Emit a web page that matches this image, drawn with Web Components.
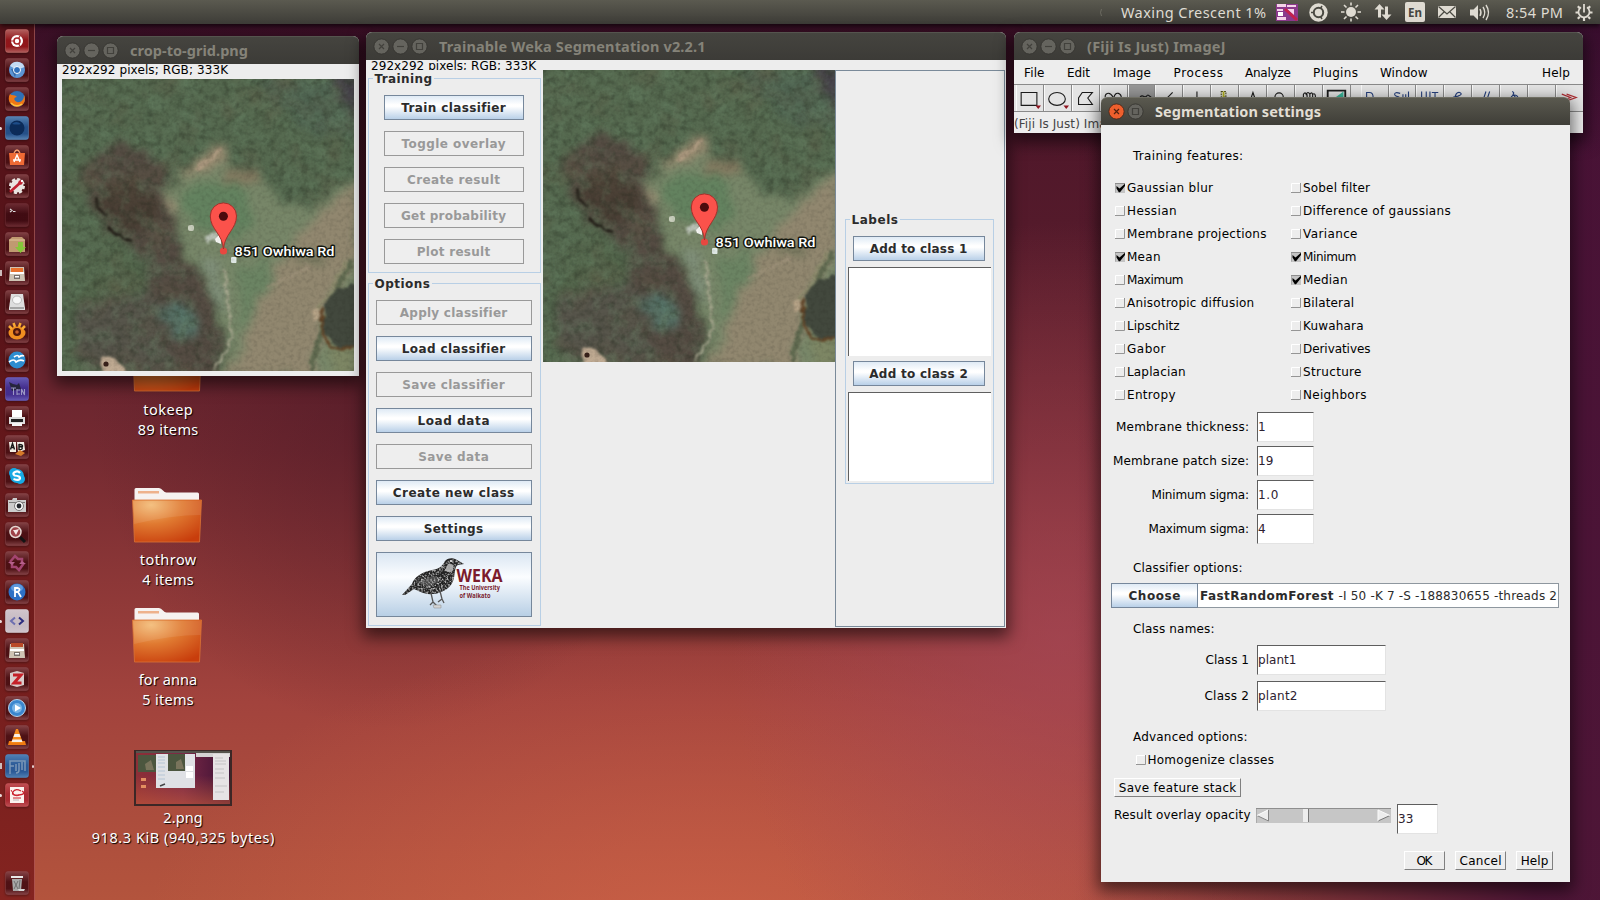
<!DOCTYPE html>
<html lang="en">
<head>
<meta charset="utf-8">
<title>Desktop</title>
<style>
html,body{margin:0;height:100%;overflow:hidden;background:#4a1728}
body{font:12px "DejaVu Sans",sans-serif;color:#000}
</style>
</head>
<body>
<desk-top></desk-top>
<script>
const fits = [];
function define(name, html, setup) {
  const tpl = document.createElement('template');
  tpl.innerHTML = html;
  customElements.define(name, class extends HTMLElement {
    connectedCallback() {
      if (this.shadowRoot) return;
      const root = this.attachShadow({mode: 'open'});
      root.append(tpl.content.cloneNode(true));
      if (setup) setup(this, root);
    }
  });
}

/* Single line of text tracked to a given advance width. */
define('fit-text', `<style>:host{display:inline-block;white-space:pre;flex:none}span{display:inline-block}</style><span><slot></slot></span>`,
  (el, root) => fits.push([el, root.querySelector('span')]));

define('win-button', `<style>
:host{display:block;width:15px;height:15px;flex:none}
svg{display:block;width:15px;height:15px;overflow:visible}
circle{fill:#65645e;stroke:#33322e;stroke-width:.8}path{fill:none;stroke:#42413c;stroke-width:1.2}
:host([hot]) circle{fill:#ee5f2d;stroke:#4b2315}:host([hot]) path{stroke:#52210f}
</style><svg viewBox="0 0 15 15"><circle cx="7.5" cy="7.5" r="7.6"/><path/></svg>`,
  (el, root) => root.querySelector('path').setAttribute('d',
    {close: 'M5 5l5 5M10 5l-5 5', min: 'M4 7.5h7', max: 'M4.500 4.500h6v6h-6z'}[el.getAttribute('kind')]));

define('app-window', `<style>
:host{display:flex;flex-direction:column;position:absolute;box-sizing:border-box;background:#ededed;border-radius:6px 6px 0 0;box-shadow:0 6px 16px 3px rgba(0,0,0,.55)}
header{display:flex;align-items:center;height:28px;flex:none;box-sizing:border-box;gap:4px;padding:0 0 0 8px;border-radius:6px 6px 0 0;background:linear-gradient(#45443f,#3c3b37);border-top:1px solid #55544e;font:bold 14.5px "Noto Sans",sans-serif;color:#858379}
.t{margin-left:8px;line-height:22px;margin-top:-1px}
:host([active]) header{background:linear-gradient(#5a594f,#3f3e38);color:#e2ded4;border-top-color:#6f6e63}
.body{flex:1;min-height:0;display:flex;flex-direction:column}
</style><header><win-button kind="close"></win-button><win-button kind="min"></win-button><win-button kind="max"></win-button><div class="t"><slot name="title"></slot></div></header><div class="body"><slot></slot></div>`,
  (el, root) => { if (el.hasAttribute('active')) { root.querySelector('[kind=min]').remove(); root.querySelector('[kind=close]').setAttribute('hot', ''); } });

define('aerial-photo', `<style>:host{display:block;width:292px;height:292px;flex:none}svg{display:block}text{font:500 13.4px Roboto,sans-serif}filter{color-interpolation-filters:sRGB}</style>
<svg width="292" height="292" viewBox="0 0 292 292">
<defs>
<filter id="edge" x="-10%" y="-10%" width="120%" height="120%"><feTurbulence type="fractalNoise" baseFrequency=".06" numOctaves="3" seed="4"/><feDisplacementMap in="SourceGraphic" scale="24" xChannelSelector="R" yChannelSelector="G"/><feGaussianBlur stdDeviation="4"/></filter>
<filter id="fine" x="-20%" y="-20%" width="140%" height="140%"><feTurbulence type="fractalNoise" baseFrequency=".15" numOctaves="2" seed="8"/><feDisplacementMap in="SourceGraphic" scale="7" xChannelSelector="R" yChannelSelector="G"/><feGaussianBlur stdDeviation="1"/></filter>
<filter id="dark" x="0" y="0" width="100%" height="100%"><feTurbulence type="fractalNoise" baseFrequency=".13" numOctaves="3" seed="11"/><feColorMatrix values="0 0 0 0 .14  0 0 0 0 .17  0 0 0 0 .12  2 0 0 0 -.9"/><feGaussianBlur stdDeviation=".5"/></filter>
<filter id="lite" x="0" y="0" width="100%" height="100%"><feTurbulence type="fractalNoise" baseFrequency=".06" numOctaves="4" seed="23"/><feColorMatrix values="0 0 0 0 .42  0 0 0 0 .54  0 0 0 0 .42  0 2.2 0 0 -.95"/></filter>
<filter id="brown" x="0" y="0" width="100%" height="100%"><feTurbulence type="fractalNoise" baseFrequency=".025" numOctaves="3" seed="31"/><feColorMatrix values="0 0 0 0 .38  0 0 0 0 .35  0 0 0 0 .28  0 0 3 0 -1.4"/></filter>
<filter id="grain" x="0" y="0" width="100%" height="100%"><feTurbulence type="fractalNoise" baseFrequency=".25" numOctaves="2" seed="5"/><feColorMatrix values="0 0 0 0 .1  0 0 0 0 .1  0 0 0 0 .08  1.2 0 0 0 -.5"/></filter>
<clipPath id="c"><rect width="292" height="292"/></clipPath>
</defs>
<g clip-path="url(#c)">
<rect width="292" height="292" fill="#566a50"/>
<g filter="url(#edge)">
<path d="M190 0H300V60L240 50Z" fill="#516653"/><path d="M270 -5H300V40L280 25Z" fill="#46424a"/>
<path d="M18 90L60 62L100 84L108 120L122 165L150 215L166 262L150 300H70L40 262L90 235L84 180L60 160L30 130Z" fill="#554c43"/>
<path d="M35 108L80 98L104 140L60 158L40 135Z" fill="#4a3f35"/>
<path d="M10 235L60 200L90 215L110 292H20Z" fill="#57554b"/>
<path d="M20 180L60 172L85 195L70 215L15 225Z" fill="#54664c"/>
<path d="M90 225L125 225L140 250L110 262Z" fill="#557268"/>
</g>
<rect width="292" height="292" filter="url(#brown)" opacity=".4"/>
<rect width="292" height="292" filter="url(#lite)" opacity=".4"/>
<rect width="292" height="292" filter="url(#dark)" opacity=".42"/>
<g filter="url(#edge)">
<path d="M103 110L130 90L160 66L168 86L198 92L208 116L245 135L300 92V300H150L170 272L158 236L135 195L120 165Z" fill="#778668"/>
<path d="M118 96L150 68L164 62L162 84L140 96Z" fill="#988a70"/><path d="M160 88L195 90L196 106L166 108Z" fill="#83785f"/>
<path d="M118 110Q150 92 186 112L192 140L178 160L130 150Z" fill="#63825f"/><path d="M138 180L158 180L166 240L152 225Z" fill="#7f8e79"/><path d="M172 190L212 176L198 222L178 252Z" fill="#6b8463"/>
<path d="M300 96L292 180L265 225L248 300H150L182 268L198 222L218 180L235 158L262 132Z" fill="#91876f"/>
<path d="M300 205L262 300H300Z" fill="#7d8664"/><ellipse cx="250" cy="178" rx="14" ry="5" fill="#6c7157"/>
<path d="M102 105L116 130L106 134Z" fill="#9a8d74"/>
</g>
<g filter="url(#fine)" fill="none">
<path d="M163 190Q166 225 169 250Q171 272 150 290" stroke="#a8a890" stroke-width="2.500"/>
<path d="M290 182L268 222L248 292" stroke="#5f694f" stroke-width="5"/><path d="M284 182L270 210L254 232" stroke="#8c8c6c" stroke-width="2"/>
<path d="M262 225L274 210L298 204V270L274 268L262 252Z" fill="#42483d"/>
<path d="M259 228L261 252L268 267L276 270L292 268" stroke="#604225" stroke-width="2.500"/>
<ellipse cx="254" cy="236" rx="4" ry="6" fill="#b6a387"/>
<path d="M34 118Q36 132 46 138M45 148L54 156L70 162" stroke="#221d17" stroke-width="2.500"/>
<path d="M205 208L248 188M242 184L248 192" stroke="#a0937c" stroke-width="1.500"/>
<path d="M158 70L150 80L134 90" stroke="#ad9a80" stroke-width="3.500"/>
<path d="M38 280Q44 275 54 280L66 294H40Z" fill="#bfaa92"/>
</g>
<circle cx="44" cy="285" r="2.600" fill="#37211a"/><rect x="126" y="146" width="6" height="6" rx="2" fill="#c9cfbd"/>
<path d="M143 158l8-6 2 4 2-4 3 11-9-3-4 6Z" fill="#b9c1b5" filter="url(#fine)"/><path d="M153 160l6-6v11l-5-2Z" fill="#f4f4f1"/><rect x="169" y="178" width="5.500" height="6" rx="1" fill="#e3ece9"/>
<rect width="292" height="292" filter="url(#grain)" opacity=".25"/>
<circle cx="161.500" cy="172" r="3.600" fill="#e74840"/>
<path d="M161.500 170C160.500 155 148.300 150 148.300 137A13.100 13.100 0 0 1 174.500 137C174.500 150 162.500 155 161.500 170Z" fill="#fb524b" stroke="#a5302b" stroke-width="1"/><circle cx="161.400" cy="137.200" r="4.500" fill="#4c0b0d"/>
<text x="172.500" y="176.700" textLength="100" lengthAdjust="spacingAndGlyphs" fill="#fff" stroke="#15180f" stroke-width="2.800" stroke-linejoin="round" paint-order="stroke">851 Owhiwa Rd</text>
</g></svg>`);

/* ---- Swing widgets ---- */
define('swing-button', `<style>
:host{display:flex;align-items:center;justify-content:center;box-sizing:border-box;height:25px;border:1px solid #76879b;font-weight:bold;color:#2b2b2b;background:linear-gradient(#dfeaf5 0,#fff 38%,#fff 45%,#b9d0e8 100%);flex:none}
:host([off]){background:#eee;border-color:#999;color:#999}
:host([logo]){height:65px;background:linear-gradient(#dae6f2 0,#fbfdff 38%,#b8cfe5 100%)}
</style><slot></slot>`);
define('swing-group', `<style>
:host{display:flex;flex-direction:column;align-items:center;position:relative;box-sizing:border-box;border:1px solid #b8cfe5;flex:none}
.l{position:absolute;left:3.500px;top:-7px;padding:0 2px;background:#ededed;font-weight:bold;color:#2b2b2b;line-height:14px}
</style><div class="l"><slot name="label"></slot></div><slot></slot>`);
define('list-box', `<style>:host{display:block;box-sizing:border-box;width:143px;height:89px;background:#fff;border-top:1px solid #5f5f5f;border-left:1px solid #5f5f5f;flex:none}</style>`);

define('weka-logo', `<style>:host{display:block;width:154px;height:63px}svg{display:block}text{font-family:"Open Sans",sans-serif;font-weight:bold;fill:#7b1c2d}filter{color-interpolation-filters:sRGB}</style>
<svg width="154" height="63" viewBox="1 1 154 63"><defs><filter id="s" x="0" y="0" width="100%" height="100%"><feTurbulence type="fractalNoise" baseFrequency=".55" numOctaves="2" seed="3"/><feColorMatrix values="0 0 0 0 .72 0 0 0 0 .72 0 0 0 0 .72 3 0 0 0 -1.3"/><feComposite in2="SourceGraphic" operator="in" result="n"/><feMerge><feMergeNode in="SourceGraphic"/><feMergeNode in="n"/></feMerge></filter></defs>
<g filter="url(#s)"><path d="M26 43L36 32C38 25 46 20 56 18C64 17 67 13 69 9C71 6 77 5 81 8L88 12L82 13C79 14 79 20 78 26C76 35 68 41 57 42C49 43 43 39 38 37L29 43Z" fill="#242424"/><path d="M72 12C76 11 78 13 77 18C75 22 71 20 69 18Z" fill="#a5a5a5"/><path d="M40 30L58 24L66 28L52 35Z" fill="#4a4a4a"/></g>
<circle cx="75" cy="9" r="1" fill="#fff"/><path d="M55 41L57 50L54 53M57 50L61 54M64 39L66 47L62 50M66 47L68 51" fill="none" stroke="#555" stroke-width="1.300"/><path d="M57 53h8v3h-7z" fill="#d4d4d4" stroke="#888" stroke-width=".5"/>
<text x="80.500" y="29.500" font-size="18.500" textLength="46" lengthAdjust="spacingAndGlyphs">WEKA</text><text x="83.500" y="37.500" font-size="6.800" textLength="40.500" lengthAdjust="spacingAndGlyphs">The University</text><text x="83.500" y="45.500" font-size="6.800" textLength="31" lengthAdjust="spacingAndGlyphs">of Waikato</text></svg>`);

define('weka-content', `<style>
:host{display:grid;grid-template-columns:177px 292px 1fr;grid-template-rows:10px 1fr;flex:1;min-height:0}
.info{grid-column:1/4;overflow:hidden;height:10px;line-height:14px;padding-left:5px;box-sizing:border-box}
.info fit-text{margin-top:-1px;display:block}
.left{padding-left:2px;position:relative}
.tr{width:173px;height:195px;margin-top:8px;padding:16px 2px 0 0;gap:11px}.tr swing-button{width:140px}
.op{width:173px;height:343px;margin-top:10px;padding:16px 2px 0 0;gap:11px}.op swing-button{width:156px}
.right{border:1px solid #7a8a99;margin-right:1px;margin-bottom:1px;padding:148px 0 0 9px}
.lb{width:149px;height:265px;padding:16px 2px 0 0}.lb swing-button{width:132px}.lb list-box{margin:6px -1px 5px 0}
</style>
<div class="info"><fit-text w="165">292x292 pixels; RGB; 333K</fit-text></div>
<div class="left">
<swing-group class="tr"><fit-text slot="label" w="57.500">Training</fit-text>
<swing-button><fit-text w="104">Train classifier</fit-text></swing-button><swing-button off><fit-text w="104">Toggle overlay</fit-text></swing-button><swing-button off><fit-text w="93">Create result</fit-text></swing-button><swing-button off><fit-text w="105">Get probability</fit-text></swing-button><swing-button off><fit-text w="73.500">Plot result</fit-text></swing-button></swing-group>
<swing-group class="op"><fit-text slot="label" w="55.500">Options</fit-text>
<swing-button off><fit-text w="107">Apply classifier</fit-text></swing-button><swing-button><fit-text w="103">Load classifier</fit-text></swing-button><swing-button off><fit-text w="102">Save classifier</fit-text></swing-button><swing-button><fit-text w="72">Load data</fit-text></swing-button><swing-button off><fit-text w="70.500">Save data</fit-text></swing-button><swing-button><fit-text w="121.500">Create new class</fit-text></swing-button><swing-button><fit-text w="59.500">Settings</fit-text></swing-button><swing-button logo><weka-logo></weka-logo></swing-button></swing-group>
</div>
<aerial-photo></aerial-photo>
<div class="right"><swing-group class="lb"><fit-text slot="label" w="46.500">Labels</fit-text>
<swing-button><fit-text w="97.500">Add to class 1</fit-text></swing-button><list-box></list-box><swing-button><fit-text w="98.500">Add to class 2</fit-text></swing-button><list-box></list-box></swing-group></div>`);

/* ---- ImageJ main window ---- */
define('imagej-content', `<style>
:host{display:block}
nav{display:flex;height:24px;align-items:center;padding:1px 0 0 10px;background:#ededed;box-sizing:border-box;font-size:12px}
nav fit-text:last-child{margin-left:auto;margin-right:13px}
.status{line-height:17px;height:21px;padding-top:4px;box-sizing:border-box;color:#444}
svg{fill:none;stroke:#1b1b1b;stroke-width:1.200}
.tools{display:flex;height:28px;box-sizing:border-box;border-top:1px solid #8a8a8a;border-bottom:1px solid #8a8a8a;padding-left:2px;background:#e4e4e4}
.tools svg{display:block;width:27.900px;height:26px;flex:none;box-sizing:border-box;border-left:1px solid #fafafa;border-right:1px solid #8a8a8a}
.tools .b{stroke:#27417e}.sp{width:10px;flex:none}.tools .sel{background:#979797}
.k{fill:#901520;stroke:none}
</style>
<nav></nav>
<div class="tools">
<svg viewBox="0 0 28 26"><path d="M4.500 7h17v14h-17z"/><path class="k" d="M20 21h6l-3 4z"/></svg>
<svg viewBox="0 0 28 26"><ellipse cx="13" cy="14" rx="9" ry="7"/><path class="k" d="M20 21h6l-3 4z"/></svg>
<svg viewBox="0 0 28 26"><path d="M6 20V13L10 7H21L16 13L21 20Z"/></svg>
<svg viewBox="0 0 28 26"><path d="M13 12C9 5 3 8 5 14C8 20 14 20 14 12C16 5 22 8 22 13"/></svg>
<svg class="sel" viewBox="0 0 28 26"><path d="M12 12c3-4 5 2 7-1s2 0 5 1"/></svg>
<svg viewBox="0 0 28 26"><path d="M10 15L18 7"/></svg>
<svg viewBox="0 0 28 26"><path d="M14 6v12"/></svg>
<svg viewBox="0 0 28 26"><path d="M10 6h5v6h-5z" stroke="#4c4b17" stroke-dasharray="2 1"/><path d="M12.500 6v6" stroke="#b3b11e" stroke-width="2"/></svg>
<svg viewBox="0 0 28 26"><path d="M11 16L14 7L17 16"/></svg>
<svg viewBox="0 0 28 26"><circle cx="12" cy="12" r="4.500"/></svg>
<svg viewBox="0 0 28 26"><path d="M8 13V9q2-3 3 0q2-4 4 0q2-3 3 0q3-2 3 3M12 9v4M15 9v4M18 9v4"/></svg>
<svg viewBox="0 0 28 26"><path d="M4 5h19v18H4z" stroke-width="2"/><path d="M13 12l8-6v8z" fill="#39b79a" stroke="none"/></svg>
<i class="sp"></i>
<svg class="b" viewBox="0 0 28 26"><path d="M5 7h3q4 0 4 5v4H5z"/></svg>
<svg class="b" viewBox="0 0 28 26"><path d="M11 8q-6-2-6 1 0 2 5 3M14 9v4h3V9M20 6v9"/></svg>
<svg class="b" viewBox="0 0 28 26"><path d="M5 6v8h3M10 6v6q2 3 4 0V6M16 7h7M19.500 7v8"/></svg>
<svg class="b" viewBox="0 0 28 26"><path d="M10 16q1-10 6-9q4 2-2 4l-4 1 5 3"/></svg>
<svg class="b" viewBox="0 0 28 26"><path d="M11 15L14 6M15 15L18 6"/></svg>
<svg class="b" viewBox="0 0 28 26"><path d="M12 6q3 1 1 3l4 5M11 12q2-3 5-2q3 1 2 4"/></svg>
<svg viewBox="0 0 28 26"></svg>
<svg viewBox="0 0 28 26" style="border-right:0"><path d="M5 9l9 3.500-9 3.500M10 9l10 3.500-10 3.500" stroke="#b22b31"/></svg>
</div><div class="status"><fit-text w="146">(Fiji Is Just) ImageJ 2.0.0</fit-text></div>`,
(el, root) => {
  const nav = root.querySelector('nav');
  let x = 10;
  for (const [t, l, w] of [['File',10,20.500],['Edit',53,23],['Image',99,38],['Process',159.500,49.500],['Analyze',231,46],['Plugins',299,45],['Window',366,47.500],['Help',0,28]]) {
    const f = document.createElement('fit-text'); f.setAttribute('w', w); f.textContent = t;
    if (l) { f.style.marginLeft = (l - x) + 'px'; x = l + w; }
    nav.append(f);
  }
});

/* ---- AWT widgets ---- */
define('awt-check', `<style>:host{display:flex;align-items:center;gap:2px}svg{display:block;width:10px;height:10px;flex:none}</style><svg viewBox="0 0 10 10"></svg><slot></slot>`,
 (el, root) => root.querySelector('svg').innerHTML = el.hasAttribute('on')
  ? '<path d="M0 0h10v10H0z" fill="#c4c4c4"/><path d="M0 9.500V.5H10" fill="none" stroke="#8d8d8d"/><path d="M1.500 3L4.500 5.500L10 .8V3L5 9.200H3.800L1.500 5.500Z" fill="#000"/>'
  : '<path d="M.5 10V.5H10" fill="none" stroke="#fff"/><path d="M9.500 0V9.500H0" fill="none" stroke="#959595"/>');
define('awt-field', `<style>:host{display:flex;align-items:center;box-sizing:border-box;width:57px;height:30px;background:#fff;border:1px solid #e3e3e3;border-top-color:#5e5e5e;border-left-color:#5e5e5e;color:#2d2130;flex:none}</style><slot></slot>`);
define('awt-button', `<style>:host{display:flex;align-items:center;justify-content:center;box-sizing:border-box;height:19px;border:1px solid #fff;border-right-color:#808080;border-bottom-color:#808080;flex:none}</style><slot></slot>`);
define('awt-scroll', `<style>:host{display:block;width:135px;height:15px;flex:none}svg{display:block}</style><svg width="135" height="15"><path d="M0 0h135v15H0z" fill="#c6c6c6"/><path d="M0 15V.5H135" fill="none" stroke="#8e8e8e"/><path d="M12 2V13L1 7.500Z" fill="#ededed"/><path d="M12.500 2V13L1 7.500" fill="none" stroke="#858585"/><path d="M12 2L1 7.500" stroke="#fff"/><path d="M122 2V13L134 7.500Z" fill="#ededed"/><path d="M122 13L134 7.500" stroke="#777"/><path d="M122 13V2L134 7.500" fill="none" stroke="#fafafa"/><path d="M47 1h6v13h-6z" fill="#ededed"/><path d="M52.500 1v13" stroke="#777"/></svg>`);

define('settings-form', `<style>
:host{display:flex;flex-direction:column;flex:1}
h3{margin:0;font:inherit;padding-left:32px;line-height:14px;flex:none;box-sizing:border-box}
.checks{display:grid;grid-template:repeat(10,23px)/176px 1fr;grid-auto-flow:column;padding-left:14px;margin-bottom:4px}
.row{display:flex;align-items:center;height:34px;flex:none}.row>div{width:148px;display:flex;justify-content:flex-end;margin-right:8px}
.row.c{height:36px}.c awt-field{width:129px}
.choose{display:flex;height:25px;padding-left:10px;flex:none}.choose swing-button{width:87px}.choose swing-button fit-text{margin-top:1px}
.opt{display:flex;align-items:center;box-sizing:border-box;width:361px;height:25px;padding-top:1px;background:#fff;border:1px solid #8e979f;border-left:0;padding-left:2px;color:#2b2b2b}
.ft{display:flex;justify-content:flex-end;padding-right:17px;margin-top:17px}
</style>
<h3 style="height:51px;padding-top:24px"><fit-text w="110">Training features:</fit-text></h3>
<div class="checks"></div>
<div class="row"><div><fit-text w="133">Membrane thickness:</fit-text></div><awt-field>1</awt-field></div>
<div class="row"><div><fit-text w="136">Membrane patch size:</fit-text></div><awt-field>19</awt-field></div>
<div class="row"><div><fit-text w="97.500">Minimum sigma:</fit-text></div><awt-field><fit-text w="20.500">1.0</fit-text></awt-field></div>
<div class="row"><div><fit-text w="100.500">Maximum sigma:</fit-text></div><awt-field>4</awt-field></div>
<h3 style="height:37px;padding-top:15px"><fit-text w="109.500">Classifier options:</fit-text></h3>
<div class="choose"><swing-button><fit-text w="52">Choose</fit-text></swing-button><div class="opt"><b><fit-text w="133.500">FastRandomForest</fit-text></b><fit-text style="margin-left:5px" w="218.500">-I 50 -K 7 -S -188830655 -threads 2</fit-text></div></div>
<h3 style="height:34px;padding-top:14px"><fit-text w="81.500">Class names:</fit-text></h3>
<div class="row c"><div><fit-text w="43.500">Class 1</fit-text></div><awt-field><fit-text w="38.500">plant1</fit-text></awt-field></div>
<div class="row c"><div><fit-text w="44.500">Class 2</fit-text></div><awt-field><fit-text w="39.500">plant2</fit-text></awt-field></div>
<h3 style="height:35px;padding-top:16px"><fit-text w="114.500">Advanced options:</fit-text></h3>
<awt-check style="height:21px;padding-left:34.500px;flex:none"><fit-text w="126.500">Homogenize classes</fit-text></awt-check>
<awt-button style="width:127px;margin:8px 0 7px 13px;"><fit-text w="117.500">Save feature stack</fit-text></awt-button>
<div style="display:flex;height:30px;align-items:flex-start;padding-left:13px;flex:none"><fit-text w="136.500" style="margin:4px 5.500px 0 0">Result overlay opacity</fit-text><awt-scroll style="margin-top:4px"></awt-scroll><awt-field style="width:41px;margin-left:6px"><fit-text w="15.500">33</fit-text></awt-field></div>
<div class="ft"><awt-button style="width:41px;margin-right:10px"><fit-text w="16">OK</fit-text></awt-button><awt-button style="width:51px;margin-right:10px"><fit-text w="42">Cancel</fit-text></awt-button><awt-button style="width:37px"><fit-text w="27.500">Help</fit-text></awt-button></div>`,
(el, root) => {
  const box = root.querySelector('.checks');
  for (const [t, w, on] of [['Gaussian blur',86,1],['Hessian',49.500],['Membrane projections',139.500],['Mean',33.500,1],['Maximum',56.500],['Anisotropic diffusion',127],['Lipschitz',52.500],['Gabor',38.500],['Laplacian',58.500],['Entropy',48.500],['Sobel filter',67],['Difference of gaussians',147.500],['Variance',54.500],['Minimum',53.500,1],['Median',44.500,1],['Bilateral',51],['Kuwahara',60.500],['Derivatives',67.500],['Structure',58.500],['Neighbors',63.500]]) {
    const c = document.createElement('awt-check'); if (on) c.setAttribute('on', '');
    const f = document.createElement('fit-text'); f.setAttribute('w', w); f.textContent = t;
    c.append(f); box.append(c);
  }
});

/* ---- Panel ---- */
define('top-panel', `<style>
:host{display:flex;align-items:center;height:24px;box-sizing:border-box;padding-left:1100px;background:linear-gradient(#5b5a50,#3d3c37);font:14.500px "Noto Sans",sans-serif;color:#dfdbd2;box-shadow:0 2px 5px rgba(0,0,0,.7);position:relative}
svg{display:block;flex:none;height:24px}fit-text{line-height:24px;margin-top:0}
text{font:bold 12px "Noto Sans",sans-serif}
</style>
<svg width="21" viewBox="0 0 21 24"><path d="M1.500 9q-2 3.500 0 7" fill="none" stroke="#7b796f" stroke-width=".7"/></svg>
<fit-text w="145">Waxing Crescent 1%</fit-text>
<svg style="width:240px" viewBox="1266 0 240 24" fill="#dfdbd2">
<path d="M1276 4h22v17h-22z" fill="#8b3a8d"/><path d="M1277 4h9v3h-9zM1287 5h9v2h-9zM1277 9h6v2h-6zM1277 17h9v3h-9zM1287 9h7v6z" fill="#f5d2ea"/><path d="M1278 12h5v4h-5z" fill="#fff"/><path d="M1285 9l12 11" stroke="#c5204c" stroke-width="3"/>
<circle cx="1318.500" cy="12.500" r="9.200"/><circle cx="1318.500" cy="12.500" r="4.700" fill="none" stroke="#4a4942" stroke-width="2"/><path d="M1311 12.500h2.500M1322 6l-1.500 2.500M1322 19l-1.500-2.500" stroke="#4a4942" stroke-width="1.500"/>
<circle cx="1351" cy="12" r="5"/><path d="M1351 2.500v3M1351 18.500v3M1341 12h3.500M1357.500 12h3.500M1344 5l2.500 2.500M1355.500 16.500l2.500 2.500M1358 5l-2.500 2.500M1346.500 16.500l-2.500 2.500" stroke="#dfdbd2" stroke-width="1.600"/>
<path d="M1379.500 4l5 5.500h-3.500v8h-3v-8h-3.500zM1386.500 20l5-5.500h-3.500v-8h-3v8h-3.500z"/>
<rect x="1405" y="2" width="20" height="20" rx="2"/><text x="1408" y="17" textLength="14" lengthAdjust="spacingAndGlyphs" fill="#46453f">En</text>
<path d="M1438 6h18v12h-18z"/><path d="M1438.500 6.500l8.500 7.500 8.500-7.500M1438.500 17.500l6-6M1455.500 17.500l-6-6" fill="none" stroke="#4a4942" stroke-width="1.200"/>
<path d="M1470 9.500h3.500l4.500-4.500v15l-4.500-4.500h-3.500z"/><path d="M1480 9q2 3.500 0 7M1483 7q3.500 5.500 0 11M1486 5q5 7.500 0 15" fill="none" stroke="#dfdbd2" stroke-width="1.400"/>
</svg>
<fit-text w="57">8:54 PM</fit-text>
<svg width="37" viewBox="1563 0 37 24" fill="none" stroke="#dfdbd2"><path d="M1581 7.200a5.500 5.500 0 1 0 6 0" stroke-width="1.700"/><path d="M1584 4v8.500" stroke-width="1.800"/><path d="M1575.500 12.500h2.500M1590 12.500h2.500M1584 18v3M1577.800 6.300l2 2M1590.200 6.300l-2 2M1577.800 18.700l2-2M1590.200 18.700l-2-2" stroke-width="2.200"/></svg>`);

/* ---- Launcher ---- */
const dimTile = ['#8c4a4e','#4d1115'];
const ICONS = [
 [['#c8706d','#a0191d'],'<circle cx="12" cy="12" r="6" fill="#fff"/><circle cx="12" cy="12" r="3" fill="none" stroke="#a72428" stroke-width="1.600"/><path d="M5.500 12h3.500M15 7l-1.500 2.500M15 17l-1.500-2.500" stroke="#a72428" stroke-width="1.200"/>'],
 [dimTile,'<circle cx="12" cy="12" r="8" fill="#5c95d4"/><path d="M12 12L5 8a8 8 0 0 1 14.500 1z" fill="#c3daf3"/><path d="M12 12l-6-1 4 8z" fill="#3465a4"/><circle cx="12" cy="12" r="3.500" fill="#2e6fbb" stroke="#fff"/>'],
 [dimTile,'<circle cx="12" cy="12" r="8" fill="#2f70b6"/><path d="M5 7C1 14 7 21 14 19.500C20 18 21 12 19 8C19 13 16 16 12 15C8 13 9 10 12 10C9 7 7 9 5 7Z" fill="#ee7615"/><path d="M6 16q5 5 11 1" stroke="#ffc33c" fill="none" stroke-width="1.500"/>'],
 [['#5b97ce','#225c9d'],'<circle cx="12" cy="12" r="7.500" fill="#0c2b58"/><path d="M7 8q4-4 9 0-4 1-9 0z" fill="#1d4c88"/>'],
 [dimTile,'<path d="M4 8h16l-1 12H5z" fill="#ee6a35"/><path d="M9 8q3-6 6 0" stroke="#f7a070" fill="none" stroke-width="1.300"/><path d="M9 17l3-7 3 7M8 15h8" stroke="#fff" fill="none" stroke-width="1.400"/>'],
 [dimTile,'<circle cx="12" cy="12" r="6.500" fill="#e9e4e0" stroke="#e9e4e0" stroke-width="3" stroke-dasharray="3 2"/><path d="M5 18l10-9" stroke="#c02030" stroke-width="2.600"/><circle cx="15.500" cy="8.500" r="2.200" fill="#c02030"/><circle cx="17" cy="7" r="1.200" fill="#fff"/>'],
 [['#743038','#420c13'],'<path d="M5 6l2 1.500-2 1.500M8 8.500h2.500" stroke="#ddd" stroke-width="1.200" fill="none"/>'],
 [dimTile,'<path d="M4 8l3-3h10l3 3v12H4z" fill="#c09a70"/><path d="M4 8h16" stroke="#e0c49b"/><path d="M13 10h5v5h3l-5.500 6-5.500-6h3z" fill="#85c63a"/>'],
 [dimTile,'<path d="M5 6h14l1 14H4z" fill="#cfc4b4"/><path d="M6 7h12v4H6z" fill="#e8722e"/><path d="M5 11h14v2H5z" fill="#fff"/><path d="M9 14h6v4H9z" fill="#77706a"/><path d="M10 15h4v1.500h-4z" fill="#fff"/>'],
 [dimTile,'<path d="M6 4h12l2 14v2H4v-2z" fill="#dedede"/><ellipse cx="12" cy="10" rx="4.500" ry="4" fill="#f7f7f7" stroke="#bcbcbc"/><path d="M5 17h14v2H5z" fill="#a5a5a5"/>'],
 [dimTile,'<ellipse cx="12" cy="14" rx="8.500" ry="6.500" fill="#ef8e20"/><path d="M4 7l3 3M8.500 4l1.500 4M15.500 4l-1.500 4M20 7l-3 3" stroke="#f9a933" stroke-width="2.500"/><circle cx="12" cy="13" r="4" fill="#4d170c"/><circle cx="12" cy="13" r="1.800" fill="#c5602e"/>'],
 [dimTile,'<circle cx="12" cy="12" r="8.500" fill="#2d8dd0"/><path d="M4 14q5-4 7 0 4-3 8-1M9 9q4-3 5 0 3-2 5-1" stroke="#fff" stroke-width="1.700" fill="none"/>'],
 [['#6d68d2','#4534a4'],'<path d="M4 5l4 2 4 1 2-2 2 6-9 2z" fill="#26253c"/><path d="M6 11h5M8.500 11v7M12 13h3M12 17h3M12 12v6M16.500 18v-6l3 6v-6" stroke="#9b98c4" stroke-width="1.100" fill="none"/>'],
 [dimTile,'<path d="M7 4h10v8H7z" fill="#fff"/><path d="M4 11h16v7H4z" fill="#ddd"/><path d="M6 13h12v3H6z" fill="#222"/><path d="M7 17h10v3H7z" fill="#f5f5f5"/>'],
 [dimTile,'<path d="M4 7h7v10H5zM12 7h7l1 8-7 2z" fill="#f2eee5"/><path d="M5.500 14.500l2-6 2 6M6.500 12.500h2.500M14 9v5.500q4 .5 3-2q2-3-3-3M14 11.800h3" stroke="#171717" stroke-width="1.400" fill="none"/><path d="M10 19l5-4 5 3-4 3z" fill="#d57a2a"/>'],
 [dimTile,'<circle cx="9" cy="9" r="5" fill="#18aae4"/><circle cx="15" cy="15" r="5" fill="#18aae4"/><circle cx="12" cy="12" r="7" fill="#18aae4"/><path d="M15 9q-2-2.500-5-1t-.5 3.500q6 .5 5.500 3t-6.500.500" stroke="#fff" stroke-width="2.200" fill="none"/>'],
 [dimTile,'<path d="M3 7h4l1-2h4v2h9v12H3z" fill="#ccc"/><path d="M4 9h16v1H4z" fill="#777"/><circle cx="14" cy="13" r="4.500" fill="#f5f5f5" stroke="#777"/><circle cx="14" cy="13" r="2.400" fill="#22262b"/>'],
 [dimTile,'<circle cx="10.500" cy="10" r="5.500" fill="#9e4248" stroke="#e6d8d3" stroke-width="1.500"/><path d="M8 8l3 5 3-6-4 1z" fill="#f5e8e6"/><path d="M15 15l5 5" stroke="#141414" stroke-width="3"/>'],
 [dimTile,'<path d="M5 11L10 5L13 8L17 8V13M19 12L14 19L11 16H7V12" fill="none" stroke="#a34570" stroke-width="2.500"/><path d="M3 11h7l-3 3zM21 13h-7l3-3z" fill="#b5608a"/>'],
 [dimTile,'<circle cx="12" cy="12" r="8.500" fill="#2d70c5"/><ellipse cx="12" cy="8" rx="6" ry="4" fill="#82b5ed" opacity=".6"/><path d="M10 17V8h3q3 1 0 4h-3M13 12l3 5" stroke="#fff" stroke-width="1.800" fill="none"/>'],
 [['#e7e4ec','#dddae4'],'<path d="M10 8.500l-4 3.500 4 3.500" stroke="#6d6fb0" stroke-width="2" fill="none"/><path d="M14 8.500l4 3.500-4 3.500" stroke="#2d2e7f" stroke-width="2" fill="none"/>'],
 [dimTile,'<path d="M5 6h14l1 14H4z" fill="#cfc4b4"/><path d="M6 5h12v4H6z" fill="#b94a28"/><path d="M5 11h14v2H5z" fill="#fff"/><path d="M9 14h6v4H9z" fill="#77706a"/><path d="M10 15h4v1.500h-4z" fill="#fff"/>'],
 [dimTile,'<path d="M5 6l7-2 7 2v12l-7 2-7-2z" fill="#d8cccc"/><path d="M8 8h8l-7 8h7.500" stroke="#c52029" stroke-width="3" fill="none"/>'],
 [dimTile,'<circle cx="12" cy="12" r="8.500" fill="#3b87cf" stroke="#b9d3ea"/><circle cx="12" cy="12" r="5" fill="#79b4e6"/><path d="M10 8.500l6 3.500-6 3.500z" fill="#fff"/>'],
 [dimTile,'<path d="M4 16h16l1 4H3z" fill="#ef7b12"/><path d="M11 4h2l5 14H6z" fill="#f58b1c"/><path d="M9.500 9h5l1 3h-7zM7.500 14.500h9l1 2.500H6.500z" fill="#f5efe8"/>'],
 [['#4f93d0','#2566ae'],'<path d="M5 20V7h7M5 12h4M11 10v7M14 9v7q0 3-3 3M12 7h8v10M17 8v8" stroke="#7b98b8" stroke-width="1.500" fill="none"/>'],
 [['#d0595d','#ba2f38'],'<path d="M5 4h14v16H5z" fill="#fbf3ee"/><path d="M16 8q-6-3-8 1t6 3 3-4" stroke="#cb222d" stroke-width="1.300" fill="none"/><path d="M6 7q4 8 8 5M8 15h8" stroke="#cb222d" fill="none"/><path d="M8 17h6" stroke="#bbb"/>'],
 [dimTile,'<path d="M6 5h12v2H6z" fill="#e8e8e8"/><path d="M7 8h10l-1 12H8z" fill="#a8a8a8"/><path d="M9 10l4 8M13 10l-4 8M15 9l-1 9" stroke="#6f6f6f"/><path d="M13 18h7l-1 2h-5z" fill="#d4d4d4"/>'],
];
define('launch-tile', `<style>:host{display:block;width:24px;height:24px;flex:none}svg{display:block;filter:drop-shadow(0 1px 1px rgba(0,0,0,.4))}</style><svg width="24" height="24" viewBox="0 0 24 24"></svg>`,
(el, root) => {
  const [[a, b], art] = ICONS[+el.getAttribute('n')];
  root.querySelector('svg').innerHTML = `<defs><linearGradient id="g" x2="0" y2="1"><stop stop-color="${a}"/><stop offset=".45" stop-color="${b}"/><stop offset=".75" stop-color="${b}"/><stop offset="1" stop-color="${a}"/></linearGradient></defs><rect x=".5" y=".5" width="23" height="23" rx="2.500" fill="url(#g)" fill-opacity=".85" stroke="${a}" stroke-opacity=".45"/>${art}`;
});
define('launcher-bar', `<style>
:host{display:flex;flex-direction:column;align-items:flex-start;gap:5px;box-sizing:border-box;width:35px;height:876px;padding:5px 0 5px 5px;border-right:1px solid rgba(255,170,160,.35);background:linear-gradient(#521219 0,#5a1419 35%,#6d1b1c 60%,#842420 100%)}
div{position:relative}div:last-child{margin-top:auto}
.r::before{content:"";position:absolute;left:-6px;top:11px;width:3px;height:3px;border-radius:50%;background:#e8dada}
.bar::before{content:"";position:absolute;left:-5px;top:9px;width:2px;height:6px;background:#cbbcbc}
.f::after{content:"";position:absolute;right:-5px;top:11px;width:2px;height:3px;background:#e8dada;border-radius:50%}
</style>`, (el, root) => {
  ICONS.forEach((_, i) => {
    const d = document.createElement('div');
    if ([3,12,20,26].includes(i)) d.className = 'r';
    if (i === 8) d.className = 'bar';
    if (i === 25) d.className = 'bar f';
    const t = document.createElement('launch-tile'); t.setAttribute('n', i);
    d.append(t); root.append(d);
  });
});

/* ---- Desktop items ---- */
define('folder-icon', `<style>:host{display:block;width:70px;height:56px}svg{display:block}</style><svg width="70" height="57" viewBox="0 0 70 57"><defs><radialGradient id="o" cx=".27" cy=".12" r="1"><stop stop-color="#f3bb76"/><stop offset=".45" stop-color="#e07a31"/><stop offset="1" stop-color="#c83d0c"/></radialGradient></defs><path d="M2.500 14V2.500Q2.500 1 4 1H27Q29 1 31 3.500T35 5.500H65.500Q67 5.500 67 7V14Z" fill="#f6f2f0"/><path d="M6 4h21v2.500H6z" fill="#eeb28c"/><path d="M.5 13H69.500L67.500 55H2.500Z" fill="url(#o)" stroke="#d97437" stroke-width=".8"/><path d="M1 14H69L68.500 28Q40 28 2 37Z" fill="#fff" opacity=".09"/></svg>`);
define('desk-item', `<style>:host{display:flex;flex-direction:column;align-items:center;position:absolute;font:14.500px/20px "Noto Sans",sans-serif;color:#fff;text-shadow:1px 1px 1px #000}</style><slot></slot>`);
define('shot-thumb', `<style>:host{display:block;width:98px;height:56px}svg{display:block}</style><svg width="98" height="56"><defs><linearGradient id="w" x2="1" y2="0"><stop stop-color="#8d2f36"/><stop offset=".5" stop-color="#7a2947"/><stop offset="1" stop-color="#3b1033"/></linearGradient><linearGradient id="v" x2="0" y2="1"><stop offset=".45" stop-color="#c55a3b" stop-opacity="0"/><stop offset="1" stop-color="#c55a3b" stop-opacity=".6"/></linearGradient></defs><path d="M0 0h98v56H0z" fill="#3c2726"/><path d="M2 2h94v52H2z" fill="url(#w)"/><path d="M2 2h94v52H2z" fill="url(#v)"/><path d="M2 1h94v2H2z" fill="#55534c"/><path d="M4 5h18v17H4zM34 4h17v17H34z" fill="#4c563f"/><path d="M11 14l6-4 3 10h-8zM42 12l5-3 3 10h-8z" fill="#79745c"/><path d="M22 4h12v17h17V4h10v34H22z" fill="#dfe1e5"/><path d="M24 7h7M24 10h7M24 13h7M24 17h7M24 21h7M24 25h7M24 29h7" stroke="#b5c5d5"/><path d="M52 16h7v5h-7zM52 22h7v6h-7z" fill="#fff"/><path d="M26 36l5-2" stroke="#444" stroke-width="1.500"/><path d="M62 3h34v4H62z" fill="#d4d2d2"/><path d="M79 4h16v46H79z" fill="#e6e3e4"/><path d="M81 8h8M81 11h11M81 14h11M81 19h9M81 23h9M81 28h10M81 36h12M81 42h9" stroke="#bbb" stroke-width=".8"/><path d="M7 28h5v3H7zM7 35h5v3H7z" fill="#e38f61"/></svg>`);

define('desk-top', `<style>
:host{display:block;position:relative;width:1600px;height:900px;overflow:hidden;
background:
linear-gradient(180deg,rgba(35,8,35,.5),rgba(35,8,35,0) 18%),
linear-gradient(90deg,rgba(75,18,56,0) 67%,rgba(72,18,54,.95) 96%),
radial-gradient(ellipse 330px 420px at 1060px 640px,rgba(168,72,92,.6),rgba(168,72,92,0)),
radial-gradient(ellipse 560px 320px at 700px 950px,rgba(215,102,76,.6),rgba(215,102,76,0)),
radial-gradient(ellipse 300px 330px at 390px 400px,rgba(70,22,36,.5),rgba(70,22,36,0)),
linear-gradient(#4a1429 0,#541a2b 25%,#742a31 50%,#a2433d 78%,#b3543d 100%)}
</style>
<top-panel></top-panel><launcher-bar></launcher-bar>
<desk-item style="left:132px;top:336px;width:70px"><folder-icon></folder-icon></desk-item>
<desk-item style="left:98px;top:399px;width:140px"><fit-text w="49.500">tokeep</fit-text><fit-text w="60.500">89 items</fit-text></desk-item>
<desk-item style="left:132px;top:487px;width:70px"><folder-icon></folder-icon></desk-item>
<desk-item style="left:98px;top:549px;width:140px"><fit-text w="56.500">tothrow</fit-text><fit-text w="51.500">4 items</fit-text></desk-item>
<desk-item style="left:132px;top:607px;width:70px"><folder-icon></folder-icon></desk-item>
<desk-item style="left:98px;top:669px;width:140px"><fit-text w="58.500">for anna</fit-text><fit-text w="51.500">5 items</fit-text></desk-item>
<desk-item style="left:83px;top:750px;width:200px"><shot-thumb style="margin-bottom:1px"></shot-thumb><fit-text w="39.500">2.png</fit-text><fit-text w="182.500">918.3 KiB (940,325 bytes)</fit-text></desk-item>
<app-window style="left:57px;top:36px;width:302px;height:340px"><fit-text slot="title" w="118">crop-to-grid.png</fit-text><div style="height:15px;line-height:14px;margin:-1px 0 1px 5px"><fit-text w="166">292x292 pixels; RGB; 333K</fit-text></div><aerial-photo style="margin-left:5px"></aerial-photo></app-window>
<app-window style="left:366px;top:32px;width:640px;height:596px"><fit-text slot="title" w="266.500">Trainable Weka Segmentation v2.2.1</fit-text><weka-content></weka-content></app-window>
<app-window style="left:1014px;top:32px;width:569px;height:101px"><fit-text slot="title" w="138.500">(Fiji Is Just) ImageJ</fit-text><imagej-content></imagej-content></app-window>
<app-window active style="left:1101px;top:97px;width:469px;height:785px"><fit-text slot="title" w="166">Segmentation settings</fit-text><settings-form></settings-form></app-window>`);

for (const [el, span] of fits) {
  const w = +el.getAttribute('w');
  if (!w) continue;
  const n = el.textContent.length, ls = (w - span.getBoundingClientRect().width) / (n - 1);
  span.style.letterSpacing = ls + 'px';
  span.style.marginRight = -ls + 'px';
}
</script>
</body>
</html>
